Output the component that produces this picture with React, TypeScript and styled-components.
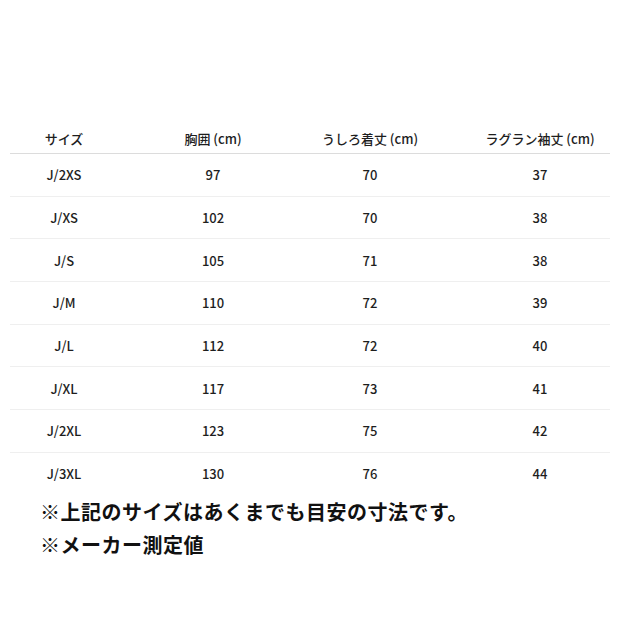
import React from 'react';
import styled, { createGlobalStyle } from 'styled-components';

const GlobalStyle = createGlobalStyle`
  html, body {
    margin: 0;
    padding: 0;
    background: #ffffff;
  }
  body {
    font-family: 'Noto Sans CJK JP', 'Noto Sans', sans-serif;
    color: #1e1e1e;
  }
`;

const Page = styled.div`
  width: 620px;
  height: 620px;
  padding-top: 124px;
  box-sizing: border-box;
`;

const Table = styled.div`
  margin-left: 10px;
  width: 600px;
`;

const Row = styled.div<{ $head?: boolean }>`
  display: grid;
  grid-template-columns: 108px 190px 124px 1fr;
  align-items: center;
  box-sizing: border-box;
  height: ${({ $head }) => ($head ? '30px' : '42.67px')};
  border-bottom: 1px solid ${({ $head }) => ($head ? '#dcdcdc' : '#efefef')};
  font-size: 13px;
  font-weight: 500;

  &:last-child {
    border-bottom: none;
  }
`;

const Cell = styled.div`
  text-align: center;
  white-space: nowrap;
  line-height: 1;

  &:last-child {
    padding-left: 38px;
  }
`;

const Notes = styled.div`
  margin-left: 40px;
  font-size: 20px;
  font-weight: bold;
  line-height: 33px;
  letter-spacing: 0.5px;
  color: #111111;
`;

const headers = ['サイズ', '胸囲 (cm)', 'うしろ着丈 (cm)', 'ラグラン袖丈 (cm)'];

const rows: [string, number, number, number][] = [
  ['J/2XS', 97, 70, 37],
  ['J/XS', 102, 70, 38],
  ['J/S', 105, 71, 38],
  ['J/M', 110, 72, 39],
  ['J/L', 112, 72, 40],
  ['J/XL', 117, 73, 41],
  ['J/2XL', 123, 75, 42],
  ['J/3XL', 130, 76, 44],
];

const App = () => {
  return (
    <>
      <GlobalStyle />
      <Page>
        <Table>
          <Row $head>
            {headers.map(h => (
              <Cell key={h}>{h}</Cell>
            ))}
          </Row>
          {rows.map(r => (
            <Row key={r[0]}>
              {r.map((v, i) => (
                <Cell key={i}>{v}</Cell>
              ))}
            </Row>
          ))}
        </Table>
        <Notes>
          <div>※上記のサイズはあくまでも目安の寸法です。</div>
          <div>※メーカー測定値</div>
        </Notes>
      </Page>
    </>
  );
};

export default App;
